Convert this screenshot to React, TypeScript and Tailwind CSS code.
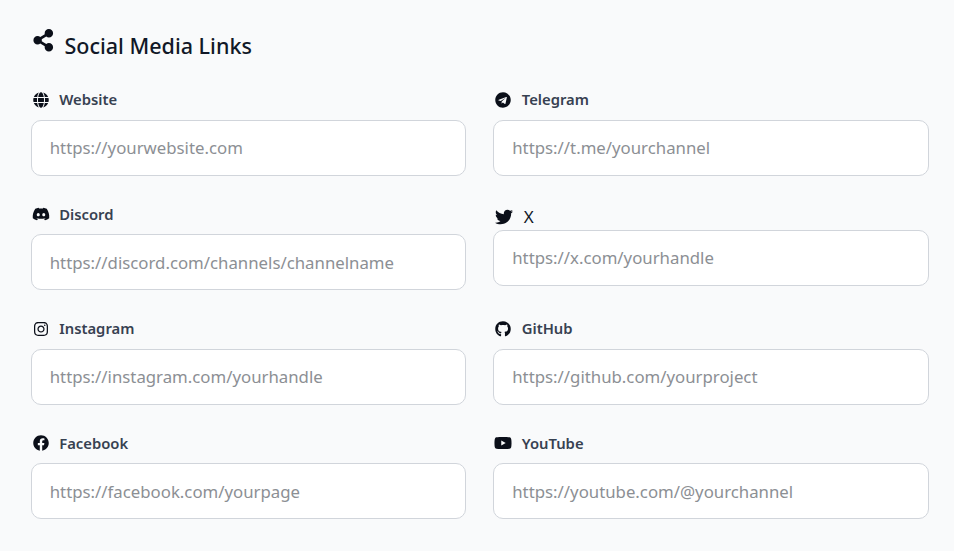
import type { ReactNode } from 'react';
import { FaDiscord, FaFacebook, FaGithub, FaGlobe, FaInstagram, FaShareAlt, FaTelegram, FaTwitter, FaYoutube } from 'react-icons/fa';

const Field = ({ icon, label, placeholder, plain }: { icon: ReactNode; label: string; placeholder: string; plain?: boolean }) => (
	<div className="flex flex-col">
		{plain ? (
			<label className="flex items-center gap-[10.5px] h-[26.5px] ml-[2px] text-[#111827] text-[17px]">
				<span className="flex justify-center w-[18px]">{icon}</span>
				{label}
			</label>
		) : (
			<label className="flex items-center gap-[9.5px] h-[20.5px] pt-[0.5px] mb-[10.5px] ml-[1px] text-[#374151] text-[14.8px] font-semibold">
				<span className="flex justify-center w-[18px] mt-[1px]">{icon}</span>
				{label}
			</label>
		)}
		<input
			placeholder={placeholder}
			className="w-full h-[56px] px-[18px] bg-white border border-[#d1d5db] rounded-[10px] text-[16.8px] placeholder:text-[#8c8f94] outline-none"
		/>
	</div>
);

export default function App() {
	const iconCls = 'w-[16px] h-[16px] text-[#0b0f19] shrink-0';
	const wideCls = 'w-[18px] h-[18px] text-[#0b0f19] shrink-0';

	return (
		<div className="min-h-[551px] bg-[#f9fafb] pl-[30.75px] pr-[25.25px] pt-[27px] font-['Noto_Sans','Open_Sans',sans-serif] overflow-hidden">
			<h2 className="flex items-start gap-[10.5px] h-[36px] text-[#111827] text-[21.5px] font-medium leading-[38px]">
				<FaShareAlt className="w-[22.5px] h-[22.5px] ml-[0.75px] mt-[2px] text-[#0b0f19]" />
				Social Media Links
			</h2>

			<div className="grid grid-cols-2 gap-x-[27px] gap-y-[27.5px] mt-[25.75px]">
				<Field icon={<FaGlobe className={iconCls} />} label="Website" placeholder="https://yourwebsite.com" />
				<Field icon={<FaTelegram className={iconCls} />} label="Telegram" placeholder="https://t.me/yourchannel" />
				<Field icon={<FaDiscord className={wideCls} />} label="Discord" placeholder="https://discord.com/channels/channelname" />
				<div>
					<Field plain icon={<FaTwitter className={wideCls} />} label="X" placeholder="https://x.com/yourhandle" />
				</div>
				<Field icon={<FaInstagram className={iconCls} />} label="Instagram" placeholder="https://instagram.com/yourhandle" />
				<Field icon={<FaGithub className={iconCls} />} label="GitHub" placeholder="https://github.com/yourproject" />
				<Field icon={<FaFacebook className={iconCls} />} label="Facebook" placeholder="https://facebook.com/yourpage" />
				<Field icon={<FaYoutube className={wideCls} />} label="YouTube" placeholder="https://youtube.com/@yourchannel" />
			</div>
		</div>
	);
}
